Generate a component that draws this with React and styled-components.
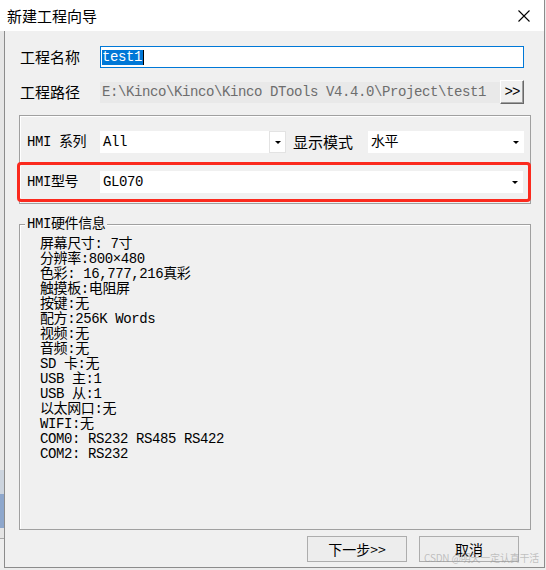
import React from "react";
import styled, { createGlobalStyle } from "styled-components";

const UI = `"Noto Sans CJK SC", "Noto Sans", sans-serif`;
const MONO = `"Liberation Mono", "Noto Sans CJK SC", monospace`;

const Global = createGlobalStyle`
  html, body { margin: 0; padding: 0; }
  body {
    width: 546px;
    height: 570px;
    overflow: hidden;
    background: #ececec;
    font-family: ${UI};
    color: #000;
  }
  * { box-sizing: border-box; }
`;

const Page = styled.div`
  position: relative;
  width: 546px;
  height: 570px;
  display: flex;
  flex-direction: column;
  background: #ececec;
`;

const TitleBar = styled.div`
  width: 545px;
  height: 31px;
  flex: none;
  background: #fff;
  border-right: 1px solid #8c8c8c;
  display: flex;
  align-items: center;
  justify-content: space-between;
  padding: 1px 14px 0 7px;
`;

const TitleText = styled.div`
  font-family: ${UI};
  font-size: 15px;
  line-height: 20px;
`;

const Lower = styled.div`
  display: flex;
  height: 537px;
  flex: none;
`;

const LeftStrip = styled.div`
  width: 4px;
  display: flex;
  flex-direction: column;
`;

const StripPart = styled.div`
  height: ${(p) => p.$h}px;
  background: ${(p) => p.$c};
  flex: ${(p) => (p.$grow ? 1 : "none")};
`;

const WindowBody = styled.div`
  width: 541px;
  height: 537px;
  background: #f0f0f0;
  border: 1px solid #8c8c8c;
  border-top: none;
  display: flex;
  flex-direction: column;
  padding: 15px 13px 5px 14px;
`;

const Row = styled.div`
  display: flex;
  align-items: center;
  height: ${(p) => p.$h}px;
  margin-top: ${(p) => p.$mt || 0}px;
  padding: 0 7px 0 1px;
  flex: none;
`;

const Label = styled.div`
  width: 80px;
  flex: none;
  font-family: ${UI};
  font-size: 15px;
  line-height: 20px;
`;

const NameInput = styled.div`
  flex: 1;
  height: 22px;
  border: 1px solid #0078d7;
  background: #fff;
  display: flex;
  align-items: center;
  padding-left: 1px;
`;

const Selected = styled.span`
  background: #0078d7;
  color: #fff;
  font-family: ${MONO};
  font-size: 14px;
  letter-spacing: -0.4px;
  line-height: 15px;
  padding-right: 1px;
`;

const Caret = styled.span`
  width: 1px;
  height: 15px;
  background: #000;
`;

const PathField = styled.div`
  flex: 1;
  height: 21px;
  background: #e9e9e9;
  color: #6d6d6d;
  font-family: ${MONO};
  font-size: 14px;
  letter-spacing: -0.4px;
  line-height: 21px;
  padding-left: 2px;
  white-space: nowrap;
  overflow: hidden;
`;

const BrowseButton = styled.div`
  width: 24px;
  height: 24px;
  flex: none;
  background: #f0f0f0;
  border: 1px solid;
  border-color: #ffffff #696969 #696969 #ffffff;
  box-shadow: inset -1px -1px 0 #a0a0a0;
  display: flex;
  align-items: center;
  justify-content: center;
  font-family: ${MONO};
  font-size: 14px;
  letter-spacing: -1px;
  line-height: 1;
  padding-bottom: 1px;
`;

const Group = styled.div`
  flex: none;
  margin-top: 11px;
  height: 89px;
  border: 1px solid #a0a0a0;
  box-shadow: inset 1px 1px 0 #fff;
  padding: 15px 0 1px 0;
  display: flex;
  flex-direction: column;
`;

const ComboRow = styled.div`
  display: flex;
  align-items: center;
  height: 22px;
  flex: none;
  padding: 0 6px 0 7px;
`;

const GLabel = styled.div`
  width: ${(p) => p.$w}px;
  margin-left: ${(p) => p.$ml || 0}px;
  flex: none;
  font-family: ${(p) => (p.$ui ? UI : MONO)};
  font-size: ${(p) => (p.$ui ? 15 : 14)}px;
  letter-spacing: ${(p) => (p.$ui ? 0 : -0.4)}px;
  line-height: 20px;
`;

const Combo = styled.div`
  width: ${(p) => p.$w}px;
  height: 22px;
  flex: none;
  background: #fff;
  display: flex;
  align-items: center;
  justify-content: space-between;
  padding-left: 3px;
  font-family: ${MONO};
  font-size: 14px;
  letter-spacing: -0.4px;
  line-height: 20px;
`;

const ArrowBox = styled.div`
  width: 17px;
  height: 22px;
  border: 1px solid ${(p) => (p.$hot ? "#e3e3e3" : "transparent")};
  display: flex;
  align-items: center;
  justify-content: center;
`;

const Triangle = styled.div`
  width: 0;
  height: 0;
  border-left: 3px solid transparent;
  border-right: 3px solid transparent;
  border-top: 3px solid #000;
`;

const Highlight = styled.div`
  margin: 9px -1px 0 -3px;
  height: 40px;
  flex: none;
  border: 3px solid #fb2a1e;
  border-radius: 4px;
  display: flex;
  align-items: center;
  padding: 0 4px 0 7px;
`;

const InfoGroup = styled.div`
  position: relative;
  flex: 1;
  margin-top: 20px;
  border: 1px solid #a0a0a0;
  box-shadow: inset 1px 1px 0 #fff;
  padding: 12px 0 0 20px;
`;

const Legend = styled.div`
  position: absolute;
  top: -8px;
  left: 5px;
  padding: 0 2px;
  background: #f0f0f0;
  font-family: ${MONO};
  font-size: 14px;
  letter-spacing: -0.4px;
  line-height: 15px;
`;

const InfoList = styled.div`
  font-family: ${MONO};
  font-size: 14px;
  letter-spacing: -0.4px;
  line-height: 15px;
  white-space: pre;
`;

const ButtonRow = styled.div`
  display: flex;
  justify-content: flex-end;
  gap: 12px;
  margin-top: 6px;
  padding-right: 12px;
  flex: none;
`;

const Button = styled.div`
  width: 100px;
  height: 26px;
  border: 1px solid #adadad;
  background: #ededed;
  display: flex;
  align-items: center;
  justify-content: center;
  font-family: ${UI};
  font-size: 14px;
  line-height: 20px;
`;

const Watermark = styled.div`
  position: absolute;
  left: 424px;
  top: 551px;
  font-family: ${UI};
  font-size: 10px;
  letter-spacing: -0.2px;
  line-height: 13px;
  color: rgba(150, 150, 150, 0.55);
  white-space: nowrap;
`;

const info = [
  "屏幕尺寸: 7寸",
  "分辨率:800×480",
  "色彩: 16,777,216真彩",
  "触摸板:电阻屏",
  "按键:无",
  "配方:256K Words",
  "视频:无",
  "音频:无",
  "SD 卡:无",
  "USB 主:1",
  "USB 从:1",
  "以太网口:无",
  "WIFI:无",
  "COM0: RS232 RS485 RS422",
  "COM2: RS232",
];

export default function App() {
  return (
    <>
      <Global />
      <Page>
        <TitleBar>
          <TitleText>新建工程向导</TitleText>
          <svg width="12" height="12" viewBox="0 0 12 12">
            <path d="M0.5 0.5 L11.5 11.5 M11.5 0.5 L0.5 11.5" stroke="#000" strokeWidth="1.1" fill="none" />
          </svg>
        </TitleBar>
        <Lower>
          <LeftStrip>
            <StripPart $h={439} $c="#e6e6e6" />
            <StripPart $h={24} $c="#ccd4de" />
            <StripPart $h={34} $c="#8ea7cc" />
            <StripPart $h={10} $c="#e4e4e4" />
            <StripPart $h={1} $c="#a8a8a8" />
            <StripPart $grow $c="#eeeeee" />
          </LeftStrip>
          <WindowBody>
            <Row $h={22}>
              <Label>工程名称</Label>
              <NameInput>
                <Selected>test1</Selected>
                <Caret />
              </NameInput>
            </Row>
            <Row $h={24} $mt={12}>
              <Label>工程路径</Label>
              <PathField>E:\Kinco\Kinco\Kinco DTools V4.4.0\Project\test1</PathField>
              <BrowseButton>&gt;&gt;</BrowseButton>
            </Row>
            <Group>
              <ComboRow>
                <GLabel $w={73}>HMI 系列</GLabel>
                <Combo $w={186}>
                  <span>All</span>
                  <ArrowBox $hot>
                    <Triangle />
                  </ArrowBox>
                </Combo>
                <GLabel $w={75} $ml={7} $ui>
                  显示模式
                </GLabel>
                <Combo $w={156}>
                  <span>水平</span>
                  <ArrowBox>
                    <Triangle />
                  </ArrowBox>
                </Combo>
              </ComboRow>
              <Highlight>
                <GLabel $w={73}>HMI型号</GLabel>
                <Combo $w={423}>
                  <span>GL070</span>
                  <ArrowBox>
                    <Triangle />
                  </ArrowBox>
                </Combo>
              </Highlight>
            </Group>
            <InfoGroup>
              <Legend>HMI硬件信息</Legend>
              <InfoList>
                {info.map((line) => (
                  <div key={line}>{line}</div>
                ))}
              </InfoList>
            </InfoGroup>
            <ButtonRow>
              <Button>下一步&gt;&gt;</Button>
              <Button>取消</Button>
            </ButtonRow>
          </WindowBody>
        </Lower>
        <Watermark>CSDN @明天一定认真干活</Watermark>
      </Page>
    </>
  );
}
